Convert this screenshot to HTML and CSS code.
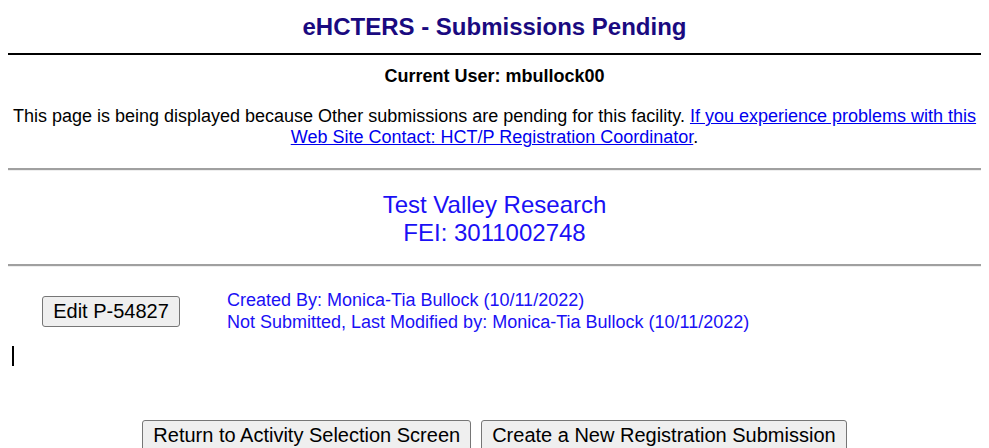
FILE: index.html
```html
<!DOCTYPE html>
<html lang="en">
<head>
  <meta charset="UTF-8">
  <title>eHCTERS - Submissions Pending</title>
  <link rel="stylesheet" href="styles.css">
</head>
<body>
  <h1 class="title">eHCTERS - Submissions Pending</h1>
  <div class="title-rule"></div>
  <p class="user">Current User: mbullock00</p>
  <p class="notice">This page is being displayed because Other submissions are pending for this facility. <a href="#">If you experience problems with this Web Site Contact: HCT/P Registration Coordinator</a>.</p>
  <hr class="rule">
  <div class="facility">
    <div>Test Valley Research</div>
    <div>FEI: 3011002748</div>
  </div>
  <hr class="rule">
  <div class="submission">
    <div class="submission-action">
      <button class="btn">Edit P-54827</button>
    </div>
    <div class="submission-info">
      <div>Created By: Monica-Tia Bullock (10/11/2022)</div>
      <div>Not Submitted, Last Modified by: Monica-Tia Bullock (10/11/2022)</div>
    </div>
  </div>
  <div class="caret-row"><span class="caret"></span></div>
  <div class="actions">
    <button class="btn">Return to Activity Selection Screen</button>
    <button class="btn">Create a New Registration Submission</button>
  </div>
</body>
</html>
```

FILE: styles.css
```css
body {
  margin: 8px;
  font-family: "Liberation Sans", Arial, sans-serif;
  font-size: 18px;
  color: #000;
  background: #fff;
}
.title {
  margin: 0 0 12px;
  padding-top: 5px;
  text-align: center;
  font-size: 24px;
  font-weight: bold;
  color: #1a0a80;
  line-height: 28px;
}
.title-rule {
  height: 2px;
  background: #000;
}
.user {
  margin: 11px 0 0;
  text-align: center;
  font-weight: bold;
  line-height: 21px;
}
.notice {
  margin: 19px 0 0;
  text-align: center;
  line-height: 21px;
}
.notice a {
  color: #0000ee;
}
.rule {
  margin: 20px 0 0;
  border: none;
  border-top: 2px solid #a0a0a0;
  border-bottom: 1px solid #eeeeee;
}
.facility {
  margin-top: 20px;
  text-align: center;
  font-size: 24px;
  line-height: 28px;
  color: #1a10f5;
}
.facility + .rule {
  margin-top: 17px;
}
.submission {
  display: flex;
  margin-top: 22px;
}
.submission-action {
  width: 206px;
  display: flex;
  justify-content: center;
  align-items: flex-start;
  padding-top: 7px;
}
.submission-info {
  padding-left: 13px;
  color: #1a10f5;
  line-height: 22px;
}
.btn {
  font-family: "Liberation Sans", Arial, sans-serif;
  font-size: 20px;
  color: #000;
  background: #efefef;
  border: 1px solid #767676;
  border-radius: 3px;
  padding: 3px 10px;
  line-height: 23px;
}
.caret-row {
  margin-top: 13px;
  padding-left: 4px;
  height: 20px;
}
.caret {
  display: block;
  width: 2px;
  height: 20px;
  background: #000;
}
.actions {
  display: flex;
  justify-content: center;
  gap: 10px;
  margin-top: 54px;
}
```
